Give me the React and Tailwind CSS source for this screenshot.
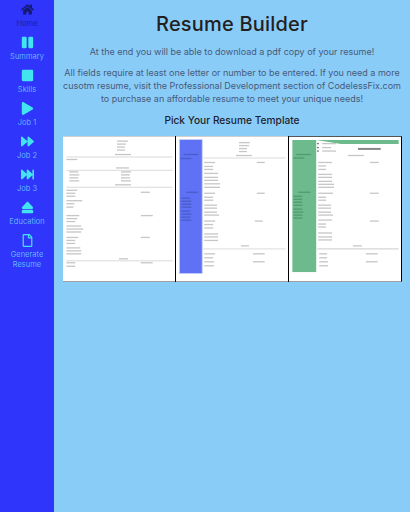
import React from "react";
import { FaHome, FaPause, FaStop, FaPlay, FaForward, FaFastForward, FaEject, FaRegFile } from "react-icons/fa";

const nav = [
  { icon: FaHome, label: ["Home"], dark: true },
  { icon: FaPause, label: ["Summary"] },
  { icon: FaStop, label: ["Skills"] },
  { icon: FaPlay, label: ["Job 1"] },
  { icon: FaForward, label: ["Job 2"] },
  { icon: FaFastForward, label: ["Job 3"] },
  { icon: FaEject, label: ["Education"] },
  { icon: FaRegFile, label: ["Generate", "Resume"] },
];

const L = ({ x, y, w, c = "#c6c6c6", h = 1.3 }) => <rect x={x} y={y} width={w} height={h} fill={c} />;

function Blocks({ xs, ys, ws, c }) {
  return ys.map((y, i) => <L key={i} x={xs} y={y} w={ws[i % ws.length]} c={c} />);
}

function T1() {
  return (
    <svg viewBox="0 0 112 145" className="w-full h-full block blur-[0.4px]">
      <Blocks xs={54} ys={[3.5, 6.5, 9.5, 12.5]} ws={[11, 9, 8, 8]} />
      <L x={52} y={17} w={16} />
      <L x={3} y={19.5} w={107} c="#e2e2e2" />
      <L x={3} y={22} w={11} />
      <L x={53} y={30.5} w={13} />
      <L x={3} y={33} w={107} c="#e2e2e2" />
      <Blocks xs={6} ys={[34.5, 37.5, 40.5, 43.5]} ws={[9, 10, 9, 10]} />
      <Blocks xs={58} ys={[34.5, 37.5, 40.5, 43.5]} ws={[10, 9, 9, 10]} />
      <L x={52} y={47.5} w={16} />
      <L x={3} y={50} w={107} c="#e2e2e2" />
      <Blocks xs={3} ys={[53, 56, 59, 63.5, 66.5, 70]} ws={[11, 9, 9, 16, 8, 7]} />
      <L x={78} y={55} w={9} />
      <Blocks xs={3} ys={[78.5, 81.5, 84.5, 89, 92, 95]} ws={[13, 11, 9, 15, 17, 15]} />
      <L x={78} y={78.5} w={12} />
      <Blocks xs={3} ys={[100.5, 103.5, 106.5, 111, 114, 117]} ws={[12, 9, 9, 14, 15, 15]} />
      <L x={78} y={100.5} w={9} />
      <L x={56} y={122} w={9} />
      <L x={3} y={124} w={107} c="#e2e2e2" />
      <L x={3} y={126} w={9} />
      <L x={78} y={126} w={12} />
      <L x={3} y={129.5} w={9} />
    </svg>
  );
}

function T2() {
  const col = "#5f72f5";
  return (
    <svg viewBox="0 0 112 145" className="w-full h-full block blur-[0.4px]">
      <rect x="3" y="2.5" width="23" height="135" fill={col} stroke="#c9d0fb" strokeWidth="0.8" />
      <L x={7} y={17} w={15} c="#4a5cc8" />
      <L x={4} y={21} w={11} c="#4a5cc8" />
      <L x={10} y={55} w={12} c="#4a5cc8" />
      <Blocks xs={5} ys={[61, 64, 67, 70, 74, 77, 80, 83]} ws={[9, 10, 10, 10, 9, 10, 9, 10]} c="#4a5cc8" />
      <Blocks xs={63} ys={[5, 8, 11, 14]} ws={[11, 10, 8, 8]} />
      <L x={60} y={18} w={16} />
      <L x={27} y={20.5} w={83} c="#e4e4e4" />
      <Blocks xs={28} ys={[25, 29, 32, 36, 40, 43, 46.5, 50]} ws={[11, 9, 9, 14, 14, 14, 16, 16]} />
      <L x={81} y={25} w={8} />
      <Blocks xs={28} ys={[56, 60, 63, 68, 71, 75, 78]} ws={[11, 9, 9, 13, 13, 13, 15]} />
      <L x={81} y={56} w={8} />
      <Blocks xs={28} ys={[84, 87.5, 91, 97, 100, 103.5]} ws={[11, 9, 9, 14, 14, 14]} />
      <L x={79} y={84} w={8} />
      <L x={65} y={109} w={8} />
      <L x={27} y={112} w={83} c="#e4e4e4" />
      <Blocks xs={28} ys={[117, 121]} ws={[11, 9]} />
      <L x={77} y={117} w={12} />
      <Blocks xs={28} ys={[125, 129]} ws={[10, 10]} />
      <L x={77} y={125} w={12} />
    </svg>
  );
}

function T3() {
  const col = "#6dbb8c";
  return (
    <svg viewBox="0 0 112 145" className="w-full h-full block blur-[0.4px]">
      <rect x="3" y="3" width="24" height="133" fill={col} />
      <path d="M27 3 H110 V7 H52 Z" fill={col} />
      <Blocks xs={28} ys={[6, 10, 13.5]} ws={[1.5, 1.5, 1.5]} c="#555" />
      <Blocks xs={33} ys={[6, 10, 13.5]} ws={[14, 9, 14]} />
      <L x={69} y={11} w={23} c="#888" h={2} />
      <L x={59} y={18} w={16} />
      <L x={7} y={17} w={15} c="#4f9a6e" />
      <L x={4} y={20.5} w={11} c="#4f9a6e" />
      <L x={9} y={55} w={12} c="#4f9a6e" />
      <Blocks xs={4} ys={[59, 62, 65, 68, 72, 75, 78, 81]} ws={[9, 9, 9, 9, 9, 10, 9, 9]} c="#4f9a6e" />
      <Blocks xs={29} ys={[25, 28.5, 32, 37, 40, 44, 47, 50]} ws={[14, 8, 8, 14, 14, 14, 16, 16]} />
      <L x={81} y={25} w={9} />
      <Blocks xs={29} ys={[56, 60, 63, 68, 71, 75, 78]} ws={[15, 8, 8, 13, 13, 13, 15]} />
      <L x={81} y={56} w={9} />
      <Blocks xs={29} ys={[83, 87, 90, 96, 100, 103]} ws={[14, 8, 8, 14, 14, 14]} />
      <L x={81} y={84} w={9} />
      <L x={64} y={109} w={9} />
      <L x={28} y={112} w={82} c="#d6d6d6" />
      <Blocks xs={30} ys={[117, 121]} ws={[8, 8]} />
      <L x={77} y={117} w={12} />
      <Blocks xs={30} ys={[125, 129]} ws={[9, 9]} />
      <L x={77} y={125} w={12} />
    </svg>
  );
}

export default function App() {
  return (
    <div className="flex w-[410px] h-[512px] bg-[#8accf8] overflow-hidden font-['Inter',sans-serif]">
      <nav className="w-[54px] shrink-0 bg-[#2f35fb] flex flex-col items-center pt-[3px]">
        {nav.map(({ icon: Icon, label, dark }) => (
          <div key={label[0]} className={`flex flex-col items-center w-full mb-[7px] ${dark ? "text-[#141a70]" : "text-[#42e4f0]"}`}>
            <Icon className="w-[13px] h-[13px] mb-[3px]" />
            {label.map((t) => (
              <span key={t} className={`text-[7.5px] leading-[10px] ${dark ? "text-[#1a1fa0]" : "text-[#62b4ff]"}`}>{t}</span>
            ))}
          </div>
        ))}
      </nav>
      <main className="flex-1 flex flex-col items-center pt-[11px] min-w-0">
        <h1 className="text-[20px] leading-[26px] font-medium text-[#231f20] tracking-[0.2px]">Resume Builder</h1>
        <p className="mt-[8px] text-[9px] leading-[13px] text-[#475a78] text-center">At the end you will be able to download a pdf copy of your resume!</p>
        <p className="mt-[8px] text-[9px] leading-[13px] text-[#475a78] text-center w-[340px]">All fields require at least one letter or number to be entered. If you need a more cusotm resume, visit the Professional Development section of CodelessFix.com to purchase an affordable resume to meet your unique needs!</p>
        <h2 className="mt-[8px] text-[10.2px] leading-[14px] font-medium text-[#1d1f2e]">Pick Your Resume Template</h2>
        <div className="mt-[9px] flex w-[340px] h-[146px] pl-px">
          <div className="w-[112px] bg-white border-y border-t-[#cfcfcf] border-b-[#a0a0a0]"><T1 /></div>
          <div className="w-px bg-black" />
          <div className="w-[112px] bg-white border-y border-t-[#cfcfcf] border-b-[#a0a0a0]"><T2 /></div>
          <div className="w-px bg-black" />
          <div className="w-[113px] bg-white border-y border-r border-t-[#555555] border-b-[#a0a0a0] border-r-black"><T3 /></div>
        </div>
      </main>
    </div>
  );
}
